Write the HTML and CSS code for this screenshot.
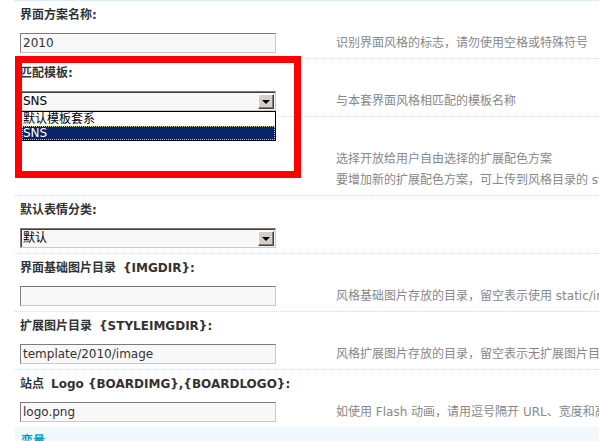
FILE: index.html
```html
<!DOCTYPE html>
<html lang="zh-CN">
<head>
    <meta charset="UTF-8">
    <title>界面风格编辑</title>
    <link rel="stylesheet" href="styles.css">
</head>
<body>
    <div class="form">
        <div class="section">
            <div class="label">界面方案名称:</div>
            <div class="row">
                <div class="field"><input class="txt" type="text" value="2010"></div>
                <div class="tip">识别界面风格的标志，请勿使用空格或特殊符号</div>
            </div>
        </div>

        <div class="section">
            <div class="label">匹配模板:</div>
            <div class="row">
                <div class="field">
                    <div class="select open">
                        <span class="value">SNS</span>
                        <span class="arrow"></span>
                        <!-- the open option list -->
                        <div class="options">
                            <div class="option">默认模板套系</div>
                            <div class="option selected">SNS</div>
                        </div>
                    </div>
                </div>
                <div class="tip">与本套界面风格相匹配的模板名称</div>
            </div>
        </div>

        <div class="section">
            <!-- label is covered by the open list above -->
            <div class="label">&nbsp;</div>
            <div class="row">
                <div class="field"></div>
                <div class="tip tip-multi">
                    选择开放给用户自由选择的扩展配色方案<br>
                    要增加新的扩展配色方案，可上传到风格目录的 style.css 中
                </div>
            </div>
        </div>

        <div class="section">
            <div class="label">默认表情分类:</div>
            <div class="row">
                <div class="field">
                    <div class="select">
                        <span class="value">默认</span>
                        <span class="arrow"></span>
                    </div>
                </div>
                <div class="tip"></div>
            </div>
        </div>

        <div class="section">
            <div class="label">界面基础图片目录<span class="var">{IMGDIR}</span>:</div>
            <div class="row">
                <div class="field"><input class="txt" type="text" value=""></div>
                <div class="tip">风格基础图片存放的目录，留空表示使用 static/image/common</div>
            </div>
        </div>

        <div class="section">
            <div class="label">扩展图片目录<span class="var">{STYLEIMGDIR}</span>:</div>
            <div class="row">
                <div class="field"><input class="txt" type="text" value="template/2010/image"></div>
                <div class="tip">风格扩展图片存放的目录，留空表示无扩展图片目录</div>
            </div>
        </div>

        <div class="section">
            <div class="label">站点<span class="var">Logo {BOARDIMG},{BOARDLOGO}</span>:</div>
            <div class="row">
                <div class="field"><input class="txt" type="text" value="logo.png"></div>
                <div class="tip">如使用 Flash 动画，请用逗号隔开 URL、宽度和高度</div>
            </div>
        </div>

        <div class="partition">变量</div>
    </div>

    <!-- annotation drawn over the screenshot -->
    <div class="highlight"></div>
</body>
</html>
```

FILE: styles.css
```css
body {
    margin: 0;
    padding: 0;
    background: #fff;
    font-family: "DejaVu Sans", "Noto Sans CJK SC", sans-serif;
    font-size: 12px;
    color: #333;
    overflow: hidden;
}

.form {
    margin-left: 15px;
    width: 760px;
}

.section {
    border-top: 1px dotted #cfdfec;
    padding-bottom: 5px;
}

.label {
    padding: 6px 0 0 5px;
    line-height: 16px;
    font-weight: bold;
    color: #333;
    white-space: nowrap;
}

.label .var {
    margin-left: 7px;
}

.row {
    display: flex;
    align-items: center;
    margin-top: 10px;
    min-height: 20px;
}

.field {
    width: 311px;
    padding-left: 5px;
    flex-shrink: 0;
}

.tip {
    padding-left: 5px;
    color: #888;
    white-space: nowrap;
    line-height: 20px;
}

.tip-multi {
    line-height: 21px;
}

.section:nth-child(3) {
    padding-bottom: 4px;
}

/* inputs */
.txt {
    display: block;
    box-sizing: border-box;
    width: 256px;
    height: 20px;
    margin: 0;
    padding: 0 2px;
    border: 1px solid;
    border-color: #7b7b7b #c9c9c9 #c9c9c9 #7b7b7b;
    background: #f8f8f8;
    font-family: "DejaVu Sans", sans-serif;
    font-size: 12px;
    color: #333;
}

/* classic select box */
.select {
    position: relative;
    box-sizing: border-box;
    width: 256px;
    height: 20px;
    border: 1px solid;
    border-color: #7b7b7b #c9c9c9 #c9c9c9 #7b7b7b;
    box-shadow: inset 1px 1px 0 #404040;
    background: #f8f8f8;
    display: flex;
    align-items: center;
    justify-content: space-between;
}

.select .value {
    padding-left: 2px;
    line-height: 16px;
    color: #000;
    font-family: "DejaVu Sans", "Noto Sans CJK SC", sans-serif;
}

.select .arrow {
    position: relative;
    box-sizing: border-box;
    width: 16px;
    height: 15px;
    margin: 1px 1px 0 0;
    background: #d4d0c8;
    border: 1px solid;
    border-color: #fff #404040 #404040 #fff;
    box-shadow: inset -1px -1px 0 #808080;
}

.select .arrow::after {
    content: "";
    position: absolute;
    left: 3px;
    top: 5px;
    border-left: 4px solid transparent;
    border-right: 4px solid transparent;
    border-top: 4px solid #000;
}

.options {
    position: absolute;
    left: 0;
    top: 19px;
    z-index: 2;
    box-sizing: border-box;
    width: 255px;
    border: 1px solid #000;
    background: #fff;
}

.option {
    height: 14px;
    line-height: 14px;
    padding-left: 1px;
    color: #000;
    font-family: "DejaVu Sans", "Noto Sans CJK SC", sans-serif;
}

.option.selected {
    background: #0a246a;
    color: #fff;
    outline: 1px dotted #c8c8a0;
    outline-offset: -1px;
}

.partition {
    background: #f2f9fd;
    color: #0099cc;
    font-weight: bold;
    padding: 6px 0 0 6px;
    line-height: 16px;
    height: 30px;
}

/* red annotation box */
.highlight {
    position: absolute;
    left: 15px;
    top: 56px;
    width: 272px;
    height: 108px;
    border: 7px solid #ff0000;
    z-index: 3;
}
```
